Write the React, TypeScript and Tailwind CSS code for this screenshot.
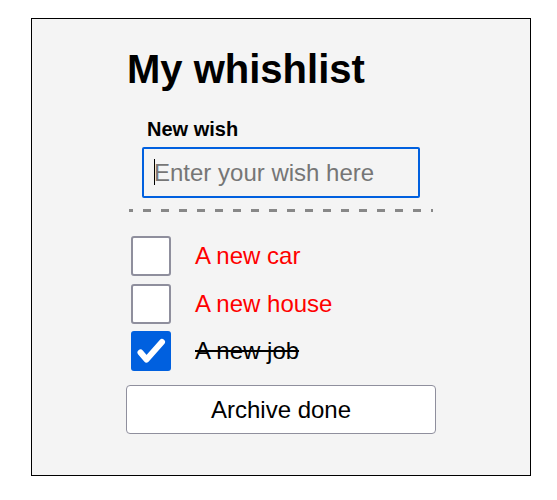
import { useState } from 'react';

const font = { fontFamily: '"Liberation Sans", Arial, sans-serif' };

interface Wish {
  id: number;
  title: string;
  done: boolean;
}

const initialWishes: Wish[] = [
  { id: 1, title: 'A new car', done: false },
  { id: 2, title: 'A new house', done: false },
  { id: 3, title: 'A new job', done: true },
];

const CheckBox = ({ checked, onToggle }: { checked: boolean; onToggle: () => void }) => (
  <button
    type="button"
    onClick={onToggle}
    className={`ml-[5px] w-10 h-10 shrink-0 rounded-[3px] flex items-center justify-center ${
      checked ? 'bg-[#0060df]' : 'bg-white border-2 border-[#8f8f9d]'
    }`}
  >
    {checked && (
      <svg viewBox="0 0 40 40" className="w-10 h-10">
        <path
          d="M9.5 21.5 L15.5 28.5 L31 11"
          fill="none"
          stroke="white"
          strokeWidth="6"
          strokeLinecap="round"
          strokeLinejoin="round"
        />
      </svg>
    )}
  </button>
);

export default function App() {
  const [wishes, setWishes] = useState<Wish[]>(initialWishes);
  const [draft, setDraft] = useState('');

  const toggle = (id: number) =>
    setWishes(ws => ws.map(w => (w.id === id ? { ...w, done: !w.done } : w)));

  const archiveDone = () => setWishes(ws => ws.filter(w => !w.done));

  return (
    <div className="pt-[18px] pl-[31px]" style={font}>
      <div className="w-[500px] h-[458px] border border-black bg-[#f4f4f4] pl-[94px] pt-[27px] flex flex-col items-start">
        {/* Title */}
        <h1 className="ml-[1px] text-[40px] leading-[46px] font-bold text-black">My whishlist</h1>

        {/* New wish */}
        <label className="ml-[21px] mt-[26px] text-[20px] leading-[23px] font-bold text-black">New wish</label>
        <div className="relative ml-[16px] mt-[6px]">
          <input
            value={draft}
            onChange={e => setDraft(e.target.value)}
            placeholder="Enter your wish here"
            className="w-[278px] h-[51px] border-2 border-[#0060df] rounded-[2px] bg-transparent px-[10px] text-[24px] text-black placeholder:text-[#767676] outline-none"
          />
          {draft === '' && <div className="absolute left-[12px] top-[12px] w-px h-[26px] bg-black" />}
        </div>

        {/* Divider */}
        <div className="ml-[3px] mt-[11px] w-[304px] h-[3px] bg-[repeating-linear-gradient(90deg,#888_0_4px,transparent_4px_14px,#888_14px_18px)]" />

        {/* Wishes */}
        <ul className="mt-[24px] flex flex-col gap-[7.5px]">
          {wishes.map(w => (
            <li key={w.id} className="flex items-center h-10">
              <CheckBox checked={w.done} onToggle={() => toggle(w.id)} />
              <span
                className={`ml-[24px] text-[24px] leading-[28px] ${
                  w.done ? 'text-black line-through' : 'text-[#ff0000]'
                }`}
              >
                {w.title}
              </span>
            </li>
          ))}
        </ul>

        <button
          type="button"
          onClick={archiveDone}
          className="mt-[14px] w-[310px] h-[49px] bg-white border border-[#8f8f9d] rounded-[4px] text-[24px] text-black"
        >
          Archive done
        </button>
      </div>
    </div>
  );
}
